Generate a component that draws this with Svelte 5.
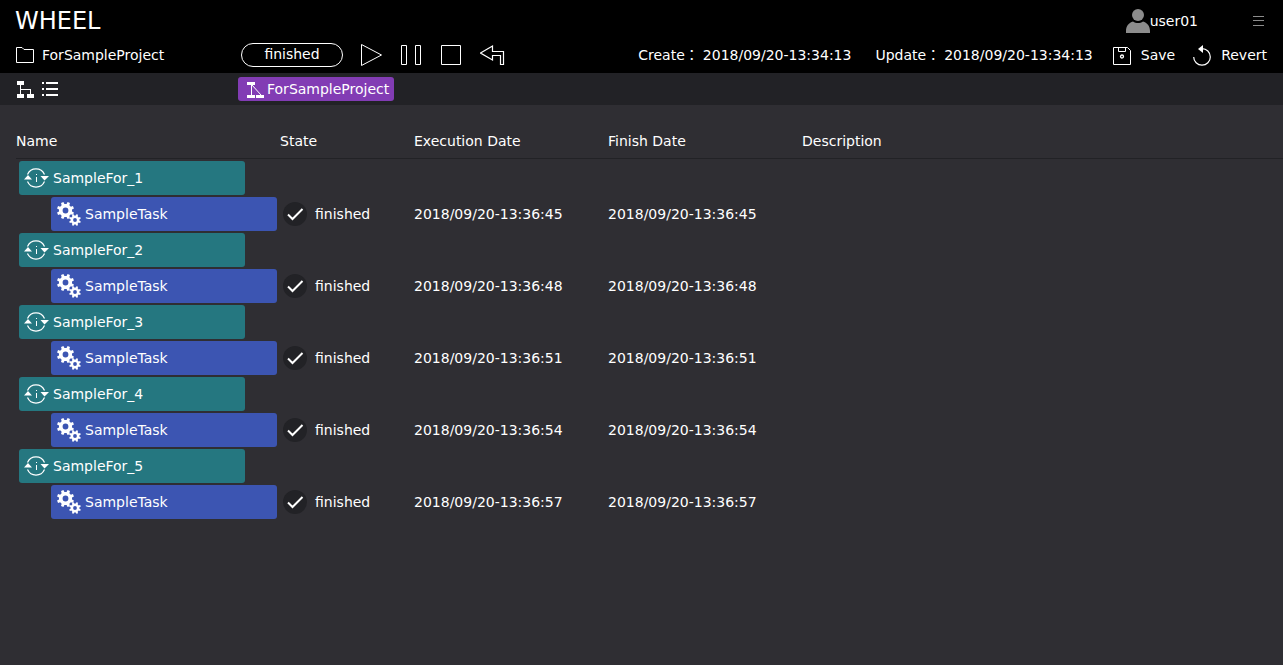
<script>
  const runs = [
    { n: 1, time: '2018/09/20-13:36:45' },
    { n: 2, time: '2018/09/20-13:36:48' },
    { n: 3, time: '2018/09/20-13:36:51' },
    { n: 4, time: '2018/09/20-13:36:54' },
    { n: 5, time: '2018/09/20-13:36:57' }
  ];

  // Outline of a gear wheel with eight blunt teeth around (cx, cy).
  function gear(cx, cy, outer, inner, teeth = 8) {
    const pts = [];
    const step = (Math.PI * 2) / teeth;
    for (let i = 0; i < teeth; i++) {
      const a = i * step + step / 2;
      for (const [r, o] of [[inner, -0.29], [outer, -0.19], [outer, 0.19], [inner, 0.29]]) {
        const t = a + o * step;
        pts.push(`${(cx + r * Math.cos(t)).toFixed(2)} ${(cy + r * Math.sin(t)).toFixed(2)}`);
      }
    }
    return `M${pts.join('L')}Z`;
  }
  function hole(cx, cy, r) {
    return `M${cx - r} ${cy}a${r} ${r} 0 1 0 ${2 * r} 0a${r} ${r} 0 1 0 ${-2 * r} 0Z`;
  }
  const gears =
    gear(8.5, 8.5, 8.7, 6.6) + hole(8.5, 8.5, 2.9) + gear(18, 18, 6, 4.5) + hole(18, 18, 1.9);
</script>

<div class="page">
  <header>
    <div class="top">
      <h1>WHEEL</h1>
      <div class="user">
        <svg width="24" height="24" viewBox="0 0 24 24" fill="#8c8c8c" aria-hidden="true">
          <circle cx="12" cy="6" r="6" />
          <path d="M0 24v-2c0-5 3-8.500 7-9.500 3 2 7 2 10 0 4 1 7 4.500 7 9.500v2z" />
        </svg>
        <span>user01</span>
      </div>
      <button class="menu" aria-label="Menu">
        <svg width="12" height="12" viewBox="0 0 12 12" fill="none" stroke="#8c8c8c">
          <path d="M1 1.500h11M1 5.500h11M1 10.500h11" />
        </svg>
      </button>
    </div>
    <div class="bar">
      <div class="project">
        <svg width="19" height="17" viewBox="0 0 19 17" fill="none" stroke="#fff" aria-hidden="true">
          <path d="M1.500 15.500V.5h5.500l2 2h9.500v13z" />
        </svg>
        <span>ForSampleProject</span>
      </div>
      <div class="status">finished</div>
      <div class="controls">
        <button aria-label="Run">
          <svg width="22" height="24" viewBox="0 0 22 24" fill="none" stroke="#fff">
            <path d="M1.500 1.500v21l20-10.500z" />
          </svg>
        </button>
        <button aria-label="Pause">
          <svg width="22" height="24" viewBox="0 0 22 24" fill="none" stroke="#fff">
            <path d="M1.500 2.500h5v19h-5zM15.500 2.500h5v19h-5z" />
          </svg>
        </button>
        <button aria-label="Stop">
          <svg width="22" height="24" viewBox="0 0 22 24" fill="none" stroke="#fff">
            <path d="M1.500 2.500h19v19h-19z" />
          </svg>
        </button>
        <button aria-label="Clean">
          <svg width="26" height="24" viewBox="0 0 26 24" fill="none" stroke="#fff">
            <path d="M.5 10l12-7v5.500h11v13h-3v-9h-8v4.500z" stroke-width="1.200" />
          </svg>
        </button>
      </div>
      <div class="right">
        <span class="date">Create：<time>2018/09/20-13:34:13</time></span>
        <span class="date second">Update：<time>2018/09/20-13:34:13</time></span>
        <button class="save">
          <svg width="18" height="20" viewBox="0 -2 18 20" fill="none" stroke="#fff" aria-hidden="true">
            <path d="M.5.5h14l3 3v14H.5zM5.500.5v4h7v-4" />
            <circle cx="9" cy="9.500" r="1.500" stroke-width="1.300" />
          </svg>
          Save
        </button>
        <button class="revert">
          <svg width="18" height="21" viewBox="0 0 18 21" fill="none" stroke="#fff" aria-hidden="true">
            <path d="M9 3.600a8.300 8.300 0 1 1-8.300 8.300" stroke-width="1.200" />
            <path d="M10 0v8l-5-4z" fill="#fff" stroke="none" />
          </svg>
          Revert
        </button>
      </div>
    </div>
  </header>

  <nav>
    <div class="views">
      <button aria-label="Graph view">
        <svg width="17" height="17" viewBox="0 0 17 17" fill="#fff">
          <path d="M0 0h7v4H0zM0 13h7v4H0zM10 13h7v4h-7zM3 4h1v9H3zM4 8h10v5h-1V9H4z" />
        </svg>
      </button>
      <button aria-label="List view">
        <svg width="16" height="14" viewBox="0 0 16 14" fill="#fff">
          <path d="M0 0h2v2H0zM4 0h12v2H4zM0 6h2v2H0zM4 6h12v2H4zM0 12h2v2H0zM4 12h12v2H4z" />
        </svg>
      </button>
    </div>
    <a class="crumb" href="#root">
      <svg width="17" height="17" viewBox="0 0 17 17" fill="#fff" aria-hidden="true">
        <path d="M0 1h8v3H0zM0 14h8v3H0zM9 14h8v3H9z" />
        <path d="M4.500 4v10M5 4l9 10" fill="none" stroke="#fff" />
      </svg>
      ForSampleProject
    </a>
  </nav>

  <main>
    <table>
      <thead>
        <tr>
          <th class="name">Name</th>
          <th class="state">State</th>
          <th class="when">Execution Date</th>
          <th class="when">Finish Date</th>
          <th>Description</th>
        </tr>
      </thead>
      <tbody>
        {#each runs as run}
          <tr>
            <td>
              <div class="node loop">
                <svg width="26" height="22" viewBox="0 0 26 22" fill="none" stroke="#fff" aria-hidden="true">
                  <path d="M3.500 7.500a9.300 9.300 0 0 1 17 0M20.500 14.500a9.300 9.300 0 0 1-17 0" stroke-width="1.200" />
                  <path d="M0 12.500L4 8l4 4.500zM16.500 9H25l-4.500 4.500z" fill="#fff" stroke="none" />
                  <path d="M12.500 10v5M12.500 7v1" />
                </svg>
                SampleFor_{run.n}
              </div>
            </td>
            <td></td>
            <td></td>
            <td></td>
            <td></td>
          </tr>
          <tr>
            <td>
              <div class="node task">
                <svg width="26" height="24" viewBox="-1 0 26 24" fill="#fff" fill-rule="evenodd" aria-hidden="true">
                  <path d={gears} />
                </svg>
                SampleTask
              </div>
            </td>
            <td>
              <div class="result">
                <svg width="24" height="24" viewBox="0 0 24 24" aria-hidden="true">
                  <circle cx="12" cy="12" r="12" fill="#222226" />
                  <path d="M5 12.500l4.500 4.500L19.500 7" fill="none" stroke="#fff" stroke-width="2" />
                </svg>
                finished
              </div>
            </td>
            <td>{run.time}</td>
            <td>{run.time}</td>
            <td></td>
          </tr>
        {/each}
      </tbody>
    </table>
  </main>
</div>

<style>
  :global(body) {
    margin: 0;
    background: #2f2e33;
  }
  .page {
    color: #fff;
    font: 14px/20px 'DejaVu Sans', 'Noto Sans CJK JP', sans-serif;
  }
  button {
    display: flex;
    align-items: center;
    padding: 0;
    border: 0;
    background: none;
    color: inherit;
    font: inherit;
    cursor: pointer;
  }
  svg {
    display: block;
    flex: none;
  }
  header {
    background: #000;
    padding: 0 16px 0 15px;
  }
  .top {
    display: flex;
    align-items: center;
    height: 41px;
  }
  h1 {
    flex: 1;
    margin: 0;
    font-size: 24px;
    font-weight: 400;
  }
  .user {
    display: flex;
    align-items: center;
    margin-right: 54px;
  }
  .menu {
    height: 40px;
    margin-right: 3px;
  }
  .bar {
    display: flex;
    align-items: center;
    height: 28px;
    padding-bottom: 4px;
  }
  .project {
    display: flex;
    align-items: center;
    gap: 8px;
    width: 226px;
  }
  .status {
    box-sizing: border-box;
    width: 102px;
    height: 24px;
    border: 1px solid #fff;
    border-radius: 12px;
    text-align: center;
  }
  .controls {
    display: flex;
    gap: 18px;
    margin-left: 17px;
  }
  .right {
    display: flex;
    align-items: center;
    margin-left: auto;
  }
  time {
    margin-left: 4px;
  }
  .second {
    margin-left: 24px;
  }
  .save {
    gap: 10px;
    margin-left: 20px;
  }
  .revert {
    gap: 10px;
    margin-left: 18px;
  }
  nav {
    display: flex;
    align-items: center;
    height: 32px;
    padding: 0 17px;
    background: #222226;
  }
  .views {
    display: flex;
    align-items: center;
    gap: 8px;
    width: 221px;
  }
  .crumb {
    display: flex;
    align-items: center;
    gap: 3px;
    height: 24px;
    padding: 0 5px 0 9px;
    border-radius: 3px;
    background: #823cb4;
    color: #fff;
    text-decoration: none;
  }
  main {
    padding: 18px 0 0 16px;
  }
  table {
    width: 100%;
    border-collapse: collapse;
    table-layout: fixed;
  }
  th {
    height: 35px;
    padding: 0;
    border-bottom: 1px solid #222226;
    font-weight: 400;
    text-align: left;
  }
  .name {
    width: 264px;
  }
  .state {
    width: 134px;
  }
  .when {
    width: 194px;
  }
  tbody::before {
    content: '';
    display: block;
    height: 1px;
  }
  td {
    height: 36px;
    padding: 0;
  }
  .node {
    display: flex;
    align-items: center;
    gap: 3px;
    width: 221px;
    height: 34px;
    padding-left: 5px;
    border-radius: 3px;
  }
  .loop {
    margin-left: 3px;
    background: #257780;
  }
  .task {
    margin-left: 35px;
    background: #3c55b2;
  }
  .result {
    display: flex;
    align-items: center;
    gap: 8px;
    margin-left: 3px;
  }
</style>
